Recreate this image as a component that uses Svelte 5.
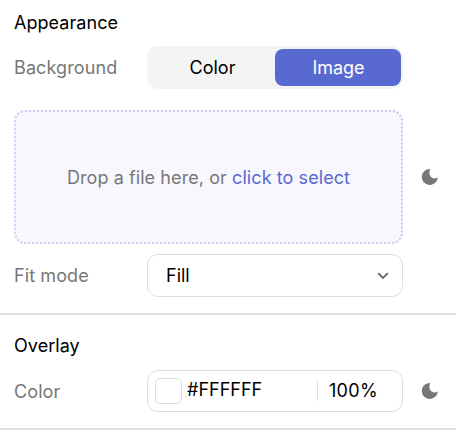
<script>
  let mode = $state('Image');
  const modes = ['Color', 'Image'];
</script>

{#snippet moon()}
  <svg class="moon" width="18" height="18" viewBox="0 0 18 18" aria-hidden="true">
    <path d="M9.2 1C4.8 .9 .8 4.4 .8 9C.8 13.4 4.3 16.9 8.8 16.9C13 16.9 16.4 13.8 16.8 9.6C16 10.1 15 10.4 13.9 10.4C10.8 10.4 8.4 8 8.4 4.9C8.4 3.4 8.7 2 9.2 1Z" />
  </svg>
{/snippet}

<main>
  <section class="appearance">
    <h2>Appearance</h2>
    <div class="row background">
      <span class="label">Background</span>
      <div class="segments">
        {#each modes as name}
          <button class:active={mode === name} onclick={() => (mode = name)}>{name}</button>
        {/each}
      </div>
    </div>
    <div class="row upload">
      <div class="drop"><span>Drop a file here, or <a href="#select">click to select</a></span></div>
      {@render moon()}
    </div>
    <div class="row fit">
      <span class="label">Fit mode</span>
      <div class="field select">
        <span>Fill</span>
        <svg width="12" height="8" viewBox="0 0 12 8" aria-hidden="true"><path d="M1.2 1.2L6 6L10.8 1.2" /></svg>
      </div>
    </div>
  </section>
  <section class="overlay">
    <h2>Overlay</h2>
    <div class="row">
      <span class="label">Color</span>
      <div class="field color">
        <i class="swatch"></i>
        <span class="hex">#FFFFFF</span>
        <span class="opacity">100%</span>
      </div>
      {@render moon()}
    </div>
  </section>
</main>

<style>
  :global(body) { background: #fff; }
  main {
    width: 456px;
    height: 444px;
    overflow: hidden;
    font: 400 18px/24px Inter, sans-serif;
    color: #000;
  }
  section {
    box-sizing: border-box;
    padding: 0 0 0 14px;
    border-bottom: 2px solid #dfdfdf;
  }
  .appearance { height: 315px; padding-top: 11px; }
  .overlay { height: 115px; padding-top: 19px; }
  h2 { margin: 0; font: inherit; letter-spacing: 0.05px; }
  .row { display: flex; align-items: center; }
  .label { width: 133px; color: #777; letter-spacing: 0.1px; }
  .background { margin-top: 11px; }
  .segments {
    box-sizing: border-box;
    display: flex;
    width: 256px;
    height: 43px;
    padding: 3px 2px;
    border-radius: 11px;
    background: #f4f4f4;
  }
  button {
    flex: 1;
    padding: 0 0 0 1px;
    border: 0;
    border-radius: 8px;
    background: none;
    font: inherit;
    color: #000;
  }
  button.active { background: #5969d2; color: #fff; }
  .upload { margin-top: 21px; }
  .drop {
    box-sizing: border-box;
    display: flex;
    align-items: center;
    justify-content: center;
    width: 389px;
    height: 134px;
    padding-top: 2px;
    border: 2px dotted #cccbf4;
    border-radius: 11px;
    background: #f8f7fe;
    color: #777;
    letter-spacing: 0.08px;
  }
  a { color: #5969d2; text-decoration: none; }
  .moon { margin-left: 18px; fill: #777; }
  .fit { margin-top: 10px; }
  .field {
    box-sizing: border-box;
    display: flex;
    align-items: center;
    width: 256px;
    height: 43px;
    border: 1px solid #dedede;
    border-radius: 11px;
  }
  .select { justify-content: space-between; padding: 0 13px 0 18px; }
  .select path { fill: none; stroke: #666; stroke-width: 1.8; }
  .overlay .row { margin-top: 12px; }
  .overlay .label { padding-top: 2px; }
  .color { height: 42px; padding-left: 7px; }
  .swatch {
    box-sizing: border-box;
    width: 27px;
    height: 26px;
    border: 1px solid #dedede;
    border-radius: 5px;
  }
  .hex { width: 130px; margin-left: 5px; padding-bottom: 2px; }
  .opacity {
    height: 20px;
    padding-left: 11px;
    border-left: 1px solid #dedede;
    line-height: 20px;
    letter-spacing: 0.3px;
  }
</style>
